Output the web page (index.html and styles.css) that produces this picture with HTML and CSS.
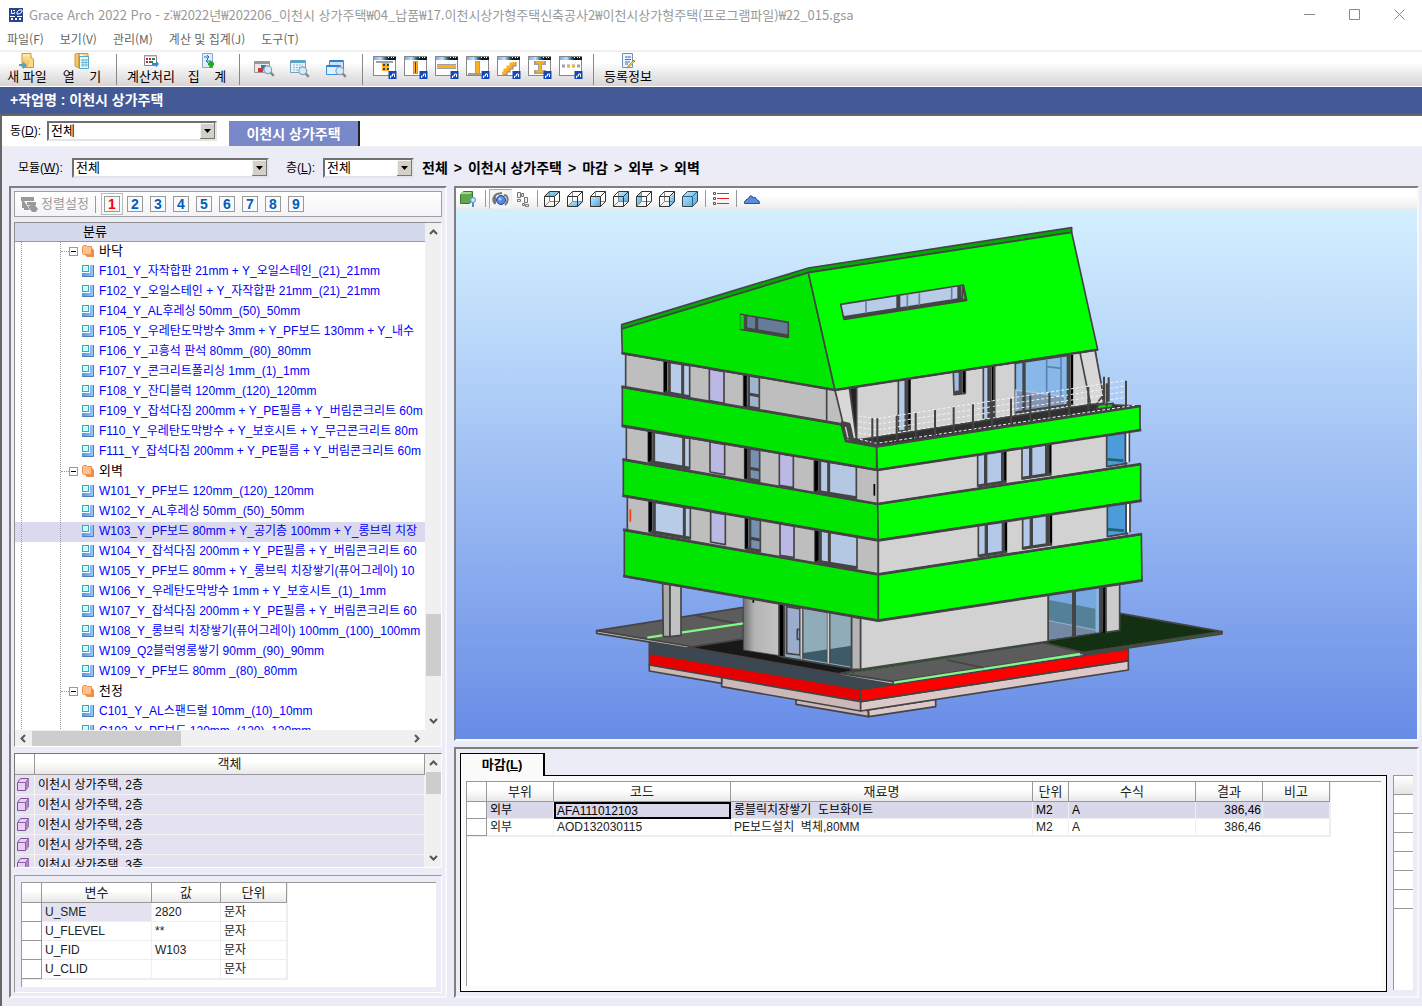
FILE: index.html
```html
<!DOCTYPE html>
<html lang="ko">
<head>
<meta charset="utf-8">
<title>Grace Arch 2022 Pro</title>
<link rel="stylesheet" href="styles.css">
</head>
<body>
<svg class="defs" aria-hidden="true">
  <defs>
    <linearGradient id="blue" x1="0" y1="0" x2="1" y2="1"><stop offset="0" stop-color="#c4e8fb"/><stop offset="1" stop-color="#4ea4dc"/></linearGradient>
    <linearGradient id="part" x1="0" y1="0" x2="1" y2="0"><stop offset="0" stop-color="#5c94dc"/><stop offset="1" stop-color="#9cc8fa"/></linearGradient>
    <linearGradient id="fold" x1="0" y1="0" x2="0" y2="1"><stop offset="0" stop-color="#fff0a8"/><stop offset="1" stop-color="#e4b456"/></linearGradient>
    <linearGradient id="cyl" x1="0" y1="0" x2="1" y2="0"><stop offset="0" stop-color="#6e6e6e"/><stop offset=".3" stop-color="#b4b4b4"/><stop offset="1" stop-color="#c4c4c4"/></linearGradient>
    <linearGradient id="winbar" x1="0" y1="0" x2="1" y2="0"><stop offset="0" stop-color="#7aa8ff"/><stop offset=".3" stop-color="#c8dcf8"/><stop offset=".55" stop-color="#006080"/><stop offset=".7" stop-color="#101828"/></linearGradient>
  </defs>
  <symbol id="i-part" viewBox="0 0 12 12"><path d="M8 0h4v12H0V8h8z" fill="url(#part)"/><path d="M11.500 0v11.500H0" fill="none" stroke="#4a80c8"/><rect x=".5" y=".5" width="6" height="6" fill="#d0fafa" stroke="#38a8b8"/><path d="M7.500 0v7.500H0" fill="none" stroke="#fff"/></symbol>
  <symbol id="i-folder" viewBox="0 0 12 12"><path d="M3 3h7l2 2v7H5l-2-2z" fill="#f08c48"/><path d="M.5 1.500l1-1h3l1 1h4v8h-8l-1-1z" fill="#ffc08c" stroke="#ee9050"/></symbol>
  <symbol id="i-cube" viewBox="0 0 12 13"><path d="M.500 4.500l3-4h8v8l-3 4h-8z" fill="#e8d0f4" stroke="#805098"/><path d="M8.500 4.500l3-4v8l-3 4z" fill="#b088c8"/><path d="M.5 4.500h8v8M8.500 4.500l3-4" fill="none" stroke="#9060a8"/></symbol>
  <symbol id="i-lens" viewBox="0 0 10 10"><path d="M6 6l3 3" stroke="#888" stroke-width="2"/><circle cx="4" cy="4" r="3.200" fill="#d0ecff" stroke="#8aa0b0"/></symbol>
  <symbol id="i-win" viewBox="0 0 24 23"><rect x=".5" y=".5" width="22" height="19" fill="#fff" stroke="#888"/><rect x="1" y="1" width="22" height="3" fill="url(#winbar)"/><path d="M15 1.500h1m2 0h1m1 0h1" stroke="#fff"/></symbol>
  <symbol id="i-badge" viewBox="0 0 8 8"><rect width="8" height="8" fill="#1448b8"/><path d="M2 7V5h2V3h2v3" fill="none" stroke="#fff"/></symbol>
  <symbol id="i-box" viewBox="0 0 16 16"><path d="M5.500.5v10h10M.5 15.500l5-5" fill="none" stroke="#888"/><path d="M.5 5.500h10v10H.5zM.5 5.500l5-5h10l-5 5M10.500 15.500l5-5V.5" fill="none" stroke="#333"/></symbol>
</svg>

<header class="titlebar">
  <svg class="app-icon" width="14" height="14" viewBox="0 0 14 14"><path fill="#24459a" d="M0 0h14v14H0z"/><path d="M2.500 2v3.500h3V4M4 2.500h2M8 4l2-2h3v2l-3 2H8zM1 8.500h5m2 0h5" fill="none" stroke="#fff"/><path d="M2 10h2v2H2zm4 0h2v2H6zm4 0h2v2h-2z" fill="#fff"/></svg>
  <h1>Grace Arch 2022 Pro - z:₩2022년₩202206_이천시 상가주택₩04_납품₩17.이천시상가형주택신축공사2₩이천시상가형주택(프로그램파일)₩22_015.gsa</h1>
  <div class="win-buttons">
    <button aria-label="최소화"><svg width="11" height="11"><path d="M0 5.500h11" stroke="#888"/></svg></button>
    <button aria-label="최대화"><svg width="11" height="11"><path d="M.5.5h10v10H.5z" fill="none" stroke="#888"/></svg></button>
    <button aria-label="닫기"><svg width="11" height="11"><path d="M.5.5l10 10m0-10l-10 10" stroke="#888"/></svg></button>
  </div>
</header>

<nav class="menubar"><a href="#">파일(F)</a><a href="#">보기(V)</a><a href="#">관리(M)</a><a href="#">계산 및 집계(J)</a><a href="#">도구(T)</a></nav>

<div class="toolbar">
  <button class="tool w-s"><svg width="16" height="16"><path d="M3 .5h9v14H3z" fill="url(#fold)" stroke="#c89840"/><path d="M12 4l2.500 2v8.500H8" fill="#f8d880" stroke="#c89840"/><path d="M0 11h4V8.500l4 4-4 3.500v-3H0z" fill="#4aa0d8"/></svg>새 파일</button>
  <button class="tool w-m"><svg width="16" height="16"><path d="M1 1l4-1v15l-4-2z" fill="#f4c868" stroke="#c89840"/><path d="M5 .5h9v4M5 15V.5" fill="#f8d880" stroke="#c89840"/><path d="M5.500 3.500h9v12h-9z" fill="#e8f8fc" stroke="#58a8c8"/><path d="M7 7h7M7 9.500h7M7 12h7M9 6v8m3-8v8" stroke="#68b8d8"/></svg>열&nbsp;&nbsp;&nbsp; 기</button>
  <span class="sep"></span>
  <button class="tool w-l"><svg width="17" height="16"><path d="M1.500 2.500h12v10h-12z" fill="#fff" stroke="#888"/><path d="M1 3h13" stroke="#aab"/><path d="M3 6h2m1 0h2M3 9h2" stroke="#d02040" stroke-width="2"/><path d="M9 6h3M6 9h4" stroke="#308040" stroke-width="2"/><path d="M9 10h4V7.500l3 3.500-3 3.500V12H9z" fill="#3d88d0"/></svg>계산처리</button>
  <button class="tool w-x"><svg width="16" height="16"><path d="M3.500 .5h10v14h-10z" fill="#e0f0fc" stroke="#90a8c0"/><path d="M5 4h5l-2-2m2 2L8 6m4 2H7l2-2M7 8l2 2" stroke="#2868d8" fill="none"/><path d="M9 11h6m-3-3v7" stroke="#18b018" stroke-width="3"/></svg>집&nbsp;&nbsp;&nbsp; 계</button>
  <span class="sep"></span>
  <div class="lens-tools">
    <button aria-label="객체 찾기"><svg width="22" height="20"><path d="M.5 2.500h15v11H.5z" fill="#e8e8e8" stroke="#999"/><path d="M1 4h14" stroke="#999" stroke-width="2"/><path d="M4 9h5v4H4z" fill="#d83030"/><path d="M7 6h5v5H7z" fill="#3878c0"/><use href="#i-lens" x="9" y="6" width="12" height="12"/></svg></button>
    <button aria-label="표 찾기"><svg width="22" height="20"><path d="M.5 1.500h15v12H.5z" fill="#e4f4fc" stroke="#78a0b8"/><path d="M1 3h14" stroke="#48a8d8" stroke-width="2"/><path d="M3 6h10M3 8.500h10M3 11h10" stroke="#90b8d0" stroke-dasharray="2 1"/><use href="#i-lens" x="8" y="7" width="12" height="12"/></svg></button>
    <button aria-label="창 찾기"><svg width="22" height="20"><path d="M3.500 1.500h14v9h-14z" fill="#c8e4fc" stroke="#3c90d8"/><path d="M.5 6.500h14v9H.5z" fill="#e0f0ff" stroke="#3c90d8"/><path d="M1 7h13M4 2h13" stroke="#2c80d0" stroke-width="2"/><use href="#i-lens" x="9" y="7" width="12" height="12"/></svg></button>
  </div>
  <span class="sep"></span>
  <div class="shape-tools">
    <button aria-label="기초"><svg width="24" height="23"><use href="#i-win"/><path d="M3 6h17" stroke="#a0a0a0" stroke-width="2"/><path d="M9 7h7v8H9z" fill="#ffb020"/><path d="M10 9h2m2 0h2m-6 4h2m2 0h2" stroke="#204868" stroke-width="2"/><use href="#i-badge" x="15" y="15" width="9" height="8"/></svg></button>
    <button aria-label="기둥"><svg width="24" height="23"><use href="#i-win"/><path d="M9 5h5v13H9z" fill="#a0a0a0"/><path d="M10 6h3v11h-3z" fill="#ffb020"/><path d="M11.500 6v11" stroke="#204868"/><use href="#i-badge" x="15" y="15" width="9" height="8"/></svg></button>
    <button aria-label="보"><svg width="24" height="23"><use href="#i-win"/><path d="M2 8h19v5H2z" fill="#a0a0a0"/><path d="M2 9h19v3H2z" fill="#ffb020"/><use href="#i-badge" x="15" y="15" width="9" height="8"/></svg></button>
    <button aria-label="벽"><svg width="24" height="23"><use href="#i-win"/><path d="M9 5h5v13H9zM2 17h13v2H2z" fill="#a0a0a0"/><path d="M10 6h3v11h-3z" fill="#ffb020"/><use href="#i-badge" x="15" y="15" width="9" height="8"/></svg></button>
    <button aria-label="계단"><svg width="24" height="23"><use href="#i-win"/><path d="M6 18h3v-3h3v-3h3V9h3V6" fill="none" stroke="#888" stroke-width="3"/><path d="M5 17h3v-3h3v-3h3V8h3V6" fill="none" stroke="#ffb020" stroke-width="3"/><use href="#i-badge" x="15" y="15" width="9" height="8"/></svg></button>
    <button aria-label="철골"><svg width="24" height="23"><use href="#i-win"/><path d="M6 7h12M6 16h12M12 7v10" stroke="#a0a0a0" stroke-width="4"/><path d="M8 6.500h8m-8 9h8m-4-9v8" stroke="#ffb020" stroke-width="2"/><use href="#i-badge" x="15" y="15" width="9" height="8"/></svg></button>
    <button aria-label="점선"><svg width="24" height="23"><use href="#i-win"/><path d="M3 10h18" stroke="#a0a0a0" stroke-width="3" stroke-dasharray="3 2"/><path d="M8 10h9" stroke="#ffb020" stroke-width="2" stroke-dasharray="3 2"/><use href="#i-badge" x="15" y="15" width="9" height="8"/></svg></button>
  </div>
  <span class="sep"></span>
  <button class="tool w-l"><svg width="16" height="16"><path d="M2.500 .5h10v14h-10z" fill="#eaf4ff" stroke="#7890b0"/><path d="M5 4h6M5 6.500h6M5 9h5M5 11h3" stroke="#4070c0"/><path d="M14 7l-6 6-1 2 2-1 6-6z" fill="#f8d040" stroke="#a07820" stroke-width=".6"/><path d="M13 7l2 2" stroke="#e04040"/></svg>등록정보</button>
</div>

<div class="jobbar">+작업명 : 이천시 상가주택</div>

<div class="workspace">
  <div class="tabrow">
    <label for="dong">동(<u>D</u>):</label>
    <select id="dong" class="combo c-dong"><option>전체</option></select>
    <button class="project-tab">이천시 상가주택</button>
  </div>
  <div class="filterrow">
    <label for="module">모듈(<u>W</u>):</label>
    <select id="module" class="combo c-module"><option>전체</option></select>
    <label for="level" class="level-label">층(<u>L</u>):</label>
    <select id="level" class="combo c-level"><option>전체</option></select>
    <strong class="crumbs"><span>전체</span><span>&gt;</span><span>이천시 상가주택</span><span>&gt;</span><span>마감</span><span>&gt;</span><span>외부</span><span>&gt;</span><span>외벽</span></strong>
  </div>

  <div class="columns">
    <aside class="side sunken">
      <div class="sortbar">
        <button class="sortbtn" disabled><svg width="17" height="16"><path d="M0 1h13v4H0zM3 5v9h6" fill="#999"/><path d="M6 6h9v3H6zM7 10l6-2 4 5-2 3h-4z" fill="#999"/><path d="M2 5v6h4" fill="none" stroke="#999" stroke-width="2"/></svg>정렬설정</button>
        <span class="minisep"></span>
        <div class="levels"><button class="on">1</button><button>2</button><button>3</button><button>4</button><button>5</button><button>6</button><button>7</button><button>8</button><button>9</button></div>
      </div>

      <section class="tree">
        <div class="tree-pane">
          <h2>분류</h2>
          <ul>
            <li class="group"><i class="toggle"></i><svg><use href="#i-folder"/></svg>바닥</li>
            <li><svg><use href="#i-part"/></svg>F101_Y_자작합판 21mm + Y_오일스테인_(21)_21mm</li>
            <li><svg><use href="#i-part"/></svg>F102_Y_오일스테인 + Y_자작합판 21mm_(21)_21mm</li>
            <li><svg><use href="#i-part"/></svg>F104_Y_AL후레싱 50mm_(50)_50mm</li>
            <li><svg><use href="#i-part"/></svg>F105_Y_우레탄도막방수 3mm + Y_PF보드 130mm + Y_내수</li>
            <li><svg><use href="#i-part"/></svg>F106_Y_고흥석 판석 80mm_(80)_80mm</li>
            <li><svg><use href="#i-part"/></svg>F107_Y_콘크리트폴리싱 1mm_(1)_1mm</li>
            <li><svg><use href="#i-part"/></svg>F108_Y_잔디블럭 120mm_(120)_120mm</li>
            <li><svg><use href="#i-part"/></svg>F109_Y_잡석다짐 200mm + Y_PE필름 + Y_버림콘크리트 60m</li>
            <li><svg><use href="#i-part"/></svg>F110_Y_우레탄도막방수 + Y_보호시트 + Y_무근콘크리트 80m</li>
            <li><svg><use href="#i-part"/></svg>F111_Y_잡석다짐 200mm + Y_PE필름 + Y_버림콘크리트 60m</li>
            <li class="group"><i class="toggle"></i><svg><use href="#i-folder"/></svg>외벽</li>
            <li><svg><use href="#i-part"/></svg>W101_Y_PF보드 120mm_(120)_120mm</li>
            <li><svg><use href="#i-part"/></svg>W102_Y_AL후레싱 50mm_(50)_50mm</li>
            <li class="selected"><svg><use href="#i-part"/></svg>W103_Y_PF보드 80mm + Y_공기층 100mm + Y_롱브릭 치장</li>
            <li><svg><use href="#i-part"/></svg>W104_Y_잡석다짐 200mm + Y_PE필름 + Y_버림콘크리트 60</li>
            <li><svg><use href="#i-part"/></svg>W105_Y_PF보드 80mm + Y_롱브릭 치장쌓기(퓨어그레이) 10</li>
            <li><svg><use href="#i-part"/></svg>W106_Y_우레탄도막방수 1mm + Y_보호시트_(1)_1mm</li>
            <li><svg><use href="#i-part"/></svg>W107_Y_잡석다짐 200mm + Y_PE필름 + Y_버림콘크리트 60</li>
            <li><svg><use href="#i-part"/></svg>W108_Y_롱브릭 치장쌓기(퓨어그레이) 100mm_(100)_100mm</li>
            <li><svg><use href="#i-part"/></svg>W109_Q2블럭영롱쌓기 90mm_(90)_90mm</li>
            <li><svg><use href="#i-part"/></svg>W109_Y_PF보드 80mm _(80)_80mm</li>
            <li class="group"><i class="toggle"></i><svg><use href="#i-folder"/></svg>천정</li>
            <li><svg><use href="#i-part"/></svg>C101_Y_AL스팬드럴 10mm_(10)_10mm</li>
            <li><svg><use href="#i-part"/></svg>C102_Y_PF보드 120mm_(120)_120mm</li>
          </ul>
        </div>
        <div class="vscroll tree-v"><svg width="9" height="6"><path d="M1 5l3.500-3.500L8 5"/></svg><span></span><svg width="9" height="6"><path d="M1 1l3.500 3.500L8 1"/></svg></div>
        <div class="hscroll"><svg width="6" height="9"><path d="M5 1L1.500 4.500 5 8"/></svg><span></span><svg width="6" height="9"><path d="M1 1l3.500 3.500L1 8"/></svg></div>
      </section>

      <section class="objects">
        <div class="objects-pane">
        <table>
          <colgroup><col class="o-icon"><col></colgroup>
          <thead><tr><th></th><th>객체</th></tr></thead>
          <tbody>
            <tr><td><svg><use href="#i-cube"/></svg></td><td>이천시 상가주택, 2층</td></tr>
            <tr><td><svg><use href="#i-cube"/></svg></td><td>이천시 상가주택, 2층</td></tr>
            <tr><td><svg><use href="#i-cube"/></svg></td><td>이천시 상가주택, 2층</td></tr>
            <tr><td><svg><use href="#i-cube"/></svg></td><td>이천시 상가주택, 2층</td></tr>
            <tr><td><svg><use href="#i-cube"/></svg></td><td>이천시 상가주택, 3층</td></tr>
          </tbody>
        </table>
        </div>
        <div class="vscroll obj-v"><svg width="9" height="6"><path d="M1 5l3.500-3.500L8 5"/></svg><span></span><svg width="9" height="6"><path d="M1 1l3.500 3.500L8 1"/></svg></div>
      </section>

      <section class="vars">
        <div class="vars-pane">
          <table class="grid">
            <colgroup><col class="v0"><col class="v1"><col class="v2"><col class="v3"></colgroup>
            <thead><tr><th></th><th>변수</th><th>값</th><th>단위</th></tr></thead>
            <tbody>
              <tr><th></th><td class="picked">U_SME</td><td>2820</td><td>문자</td></tr>
              <tr><th></th><td>U_FLEVEL</td><td>**</td><td>문자</td></tr>
              <tr><th></th><td>U_FID</td><td>W103</td><td>문자</td></tr>
              <tr><th></th><td>U_CLID</td><td></td><td>문자</td></tr>
            </tbody>
          </table>
        </div>
      </section>
    </aside>

    <main class="content">
      <section class="viewer sunken">
        <div class="viewbar">
          <button aria-label="모델 표시"><svg width="18" height="16"><path d="M.5 3.500l3-3h9v9l-3 3h-9z" fill="#60a850" stroke="#387830"/><path d="M1 1h11L10 3H1z" fill="#a0d890"/><circle cx="13" cy="9" r="2.500" fill="#c8e8ff" stroke="#4890c8"/><path d="M13 12v4" stroke="#4890c8" stroke-width="2"/></svg></button>
          <span class="minisep"></span>
          <button class="pressed" aria-label="회전"><svg width="17" height="16"><path d="M3 13C0 9 1 5 5 3l5-1M3 5v8M14 4c3 4 2 7-1 10M12 4l3 1" fill="none" stroke="#777" stroke-width="2"/><circle cx="9" cy="9" r="4.500" fill="#5888e4" stroke="#204898"/><circle cx="8" cy="8" r="1.500" fill="#b8d0fc"/></svg></button>
          <button aria-label="보행"><svg width="14" height="16"><path d="M1.500 1.500h3v5h-3zM1.500 8.500h3v2h-3zM5.500 2.500h2v3h-2zM8.500 6.500h3v5h-3zM9.500 13.500h3v2h-3zM6.500 12.500h2v2h-2z" fill="#eee" stroke="#777"/></svg></button>
          <span class="minisep"></span>
          <div class="cubes">
            <button aria-label="위"><svg width="16" height="16"><path d="M0 5l5-5h11l-5 5z" fill="url(#blue)"/><use href="#i-box"/></svg></button>
            <button aria-label="아래"><svg width="16" height="16"><path d="M0 16l5-5h11l-5 5z" fill="url(#blue)"/><use href="#i-box"/></svg></button>
            <button aria-label="앞"><svg width="16" height="16"><use href="#i-box"/><path d="M1 6h9v9H1z" fill="url(#blue)"/></svg></button>
            <button aria-label="뒤"><svg width="16" height="16"><path d="M5 1h11v10H5z" fill="url(#blue)"/><use href="#i-box"/></svg></button>
            <button aria-label="왼쪽"><svg width="16" height="16"><path d="M0 6l5-5v10l-5 5z" fill="url(#blue)"/><use href="#i-box"/></svg></button>
            <button aria-label="오른쪽"><svg width="16" height="16"><path d="M11 6l5-5v10l-5 5z" fill="url(#blue)"/><use href="#i-box"/></svg></button>
            <button aria-label="입체"><svg width="16" height="16"><path d="M.5 5.500l5-5h10v10l-5 5H.5z" fill="url(#blue)" stroke="#345"/><path d="M.5 5.500h10v10m0-10l5-5" fill="none" stroke="#268"/></svg></button>
          </div>
          <span class="minisep"></span>
          <button aria-label="목록"><svg width="16" height="14"><path d="M4 1.500h12M4 6.500h12M4 11.500h12" stroke="#f02020"/><path d="M.5.5h2v2h-2zm0 5h2v2h-2zm0 5h2v2h-2z" fill="#fff" stroke="#555"/></svg></button>
          <span class="minisep"></span>
          <button aria-label="지형"><svg width="16" height="10"><path d="M.5 9.500V7.500L3 5h1l2-3h2l1 2 2-1 2 3 2 1 .500 2.500z" fill="#5c8cdc" stroke="#2c50a0"/></svg></button>
        </div>
        <svg class="model" viewBox="-402 -3 2883 1590" role="img" aria-label="건물 모델">
          <g stroke="#444" stroke-width="5" stroke-linejoin="round">
            <!-- foundation -->
            <g fill="#ccb8b8"><path d="M618 1468L835 1502V1520L618 1483z"/><path d="M395 1400L812 1472V1503L395 1430z"/><path d="M178 1363L395 1400V1420L178 1383z"/></g>
            <g fill="#dcc8c8"><path d="M835 1500L1037 1468V1490L837 1520z"/><path d="M812 1475L1615 1352V1380L812 1503z"/></g>
            <path d="M178 1296L812 1402V1440L178 1330z" fill="#3c4754"/>
            <path d="M178 1330L812 1438V1475L178 1365z" fill="#e60000"/>
            <path d="M812 1438L1615 1317V1352L812 1475z" fill="#f00"/>
            <path d="M812 1400L905 1415V1424L812 1438z" fill="#3c4754"/>
            <!-- ground slabs -->
            <path d="M20 1262L460 1192V1290L295 1312L20 1268z" fill="#5c5c5c"/>
            <path d="M20 1262V1270L295 1315V1308z" fill="#bbb"/>
            <path d="M320 1217L440 1240" fill="none"/>
            <path d="M172 1283L460 1240" stroke="#84f884" stroke-width="7"/>
            <path d="M295 1312L460 1287L815 1375L750 1392z" fill="#181818"/>
            <path d="M1355 1298L1590 1210L1896 1265L1480 1328z" fill="#133013"/>
            <path d="M1480 1328L1896 1265V1272L1480 1334z" fill="#287028"/>
            <path d="M750 1390L1360 1298L1480 1328L905 1415z" fill="#5c5c5c"/>
            <path d="M750 1390V1396L902 1422H910V1415z" fill="#bbb"/>
            <path d="M912 1418L1470 1332" stroke="#84f884" stroke-width="7"/>
            <path d="M1070 1350L1180 1373" fill="none"/>
            <path d="M785 1387L1355 1299" stroke="#265c26" stroke-dasharray="10 7" fill="none"/>
            <!-- ground storey -->
            <path d="M218 1120L240 1123V1280H220z" fill="#aaa"/><path d="M240 1123L273 1128V1276L240 1280z" fill="#c2c2c2"/>
            <path d="M460 1160L570 1178V1337L460 1320z" fill="url(#cyl)" stroke-width="2"/>
            <path d="M567 1180L583 1183V1342L567 1338z" fill="#000"/>
            <path d="M583 1183L785 1217V1376L583 1342z" fill="#8facb8"/>
            <path d="M590 1190L630 1197V1335L590 1330z" fill="#9caccc"/>
            <path d="M622 1258h8v30h-8z" fill="none"/>
            <path d="M635 1330L785 1307V1370L635 1345z" fill="#3c5a68" stroke="none"/>
            <path d="M635 1195V1348M716 1207V1360" stroke="#444" stroke-width="11"/><path d="M634 1195V1348M715 1207V1360" stroke="#ccc"/>
            <path d="M785 1220L812 1225V1378H785z" fill="#b4b4b4"/>
            <path d="M812 1222L1375 1155V1294L812 1378z" fill="#d2d2d2"/>
            <path d="M1375 1152L1530 1130V1267L1375 1292z" fill="#78a8e0"/><path d="M1377 1170L1516 1196V1258L1377 1232z" fill="#548098" stroke="none"/><path d="M1377 1232L1516 1258V1268L1377 1288z" fill="#7488a4" stroke="none"/><path d="M1377 1232L1516 1260" stroke="#a8c4dc" stroke-width="2"/><path d="M1522 1132V1268" stroke="#90b4dc" stroke-width="7"/>
            <path d="M1452 1140V1280M1535 1130V1265" stroke-width="12"/><path d="M1543 1128V1268" stroke="#000" stroke-width="7"/>
            <path d="M1548 1128L1589 1122V1261L1548 1267z" fill="#ccc"/>
            <!-- storey 2 -->
            <path d="M112 860L865 990V1095L112 963z" fill="#bebebe"/><path d="M865 990L1610 872V978L865 1093z" fill="#d2d2d2"/>
            <!-- storey 3 -->
            <path d="M109 648L863 778V884L109 752z" fill="#bebebe"/><path d="M863 780L1607 662V768L863 882z" fill="#d2d2d2"/>
            <g id="storey">
              <path d="M175 664L299 685V776L175 755z" fill="#b8cce8"/><path d="M180 664V755" stroke="#000" stroke-width="11"/><path d="M191 666V758M281 681V770" stroke-width="9"/><path d="M180 755L299 775" stroke-width="10"/>
              <path d="M360 696L404 703V794L360 786z" fill="#bcb8e4"/>
              <path d="M464 714L509 721V815L464 806z" fill="#7890b0"/><path d="M468 714V806" stroke="#000" stroke-width="9"/><path d="M478 716V808" stroke-width="8"/><path d="M480 775L509 780M470 806L509 813" stroke-width="9"/>
              <path d="M568 731L610 738V833L568 826z" fill="#bcb8e4"/>
              <path d="M673 750L799 770V865L673 844z" fill="#b4c8e4"/><path d="M679 750V844" stroke="#000" stroke-width="11"/><path d="M689 752V846M716 757V850" stroke-width="9"/><path d="M680 844L799 864" stroke-width="10"/>
              <path d="M1163 735L1245 722V815L1163 828z" fill="#b4c8e8"/><path d="M1187 730V824M1238 724V816" stroke-width="10"/><path d="M1246 722V818" stroke="#000" stroke-width="7"/><path d="M1163 828L1248 815" stroke-width="9"/>
              <path d="M1296 715L1375 703V793L1296 807z" fill="#b4c8e8"/><path d="M1322 710V803M1370 703V795" stroke-width="10"/><path d="M1381 702V796" stroke="#000" stroke-width="7"/><path d="M1296 805L1383 792" stroke-width="9"/>
              <path d="M1550 676L1610 667V760L1550 770z" fill="#4c9cdc"/><path d="M1552 748L1600 752" stroke="#246070" stroke-width="8"/><path d="M1606 667V760M1618 665V757" stroke-width="5"/><path d="M1612 666V757" stroke="#fff" stroke-width="6"/>
            </g>
            <use href="#storey" x="2" y="210"/>
            <!-- storey 4 -->
            <path d="M107 432L735 540L765 650L107 535z" fill="#bebebe"/>
            <path d="M222 455L299 467V560L222 547z" fill="#b8cce8"/><path d="M227 455V547" stroke="#000" stroke-width="10"/><path d="M238 457V550M278 464V555" stroke-width="9"/><path d="M225 547L299 560" stroke-width="9"/>
            <path d="M358 477L402 485V580L358 572z" fill="#bcb8e4"/>
            <path d="M461 495L508 503V598L461 590z" fill="#a0b4cc"/><path d="M466 495V592" stroke="#000" stroke-width="9"/><path d="M476 497V592" stroke-width="8"/><path d="M480 553L508 558M470 590L508 597" stroke-width="9"/>
            <path d="M710 536V632"/>
            <path d="M735 540L1515 420L1540 580L800 695z" fill="#d2d2d2"/>
            <path d="M780 534L800 532V690L790 640z" fill="#222"/>
            <path d="M925 512L960 507V660L925 664z" fill="#b4c8e8"/><path d="M950 508V660" stroke-width="13"/><path d="M958 508V650" stroke="#000" stroke-width="6"/>
            <path d="M1090 487L1126 482V550L1092 554z" fill="#a4bce0"/><path d="M1112 484V546L1092 550" stroke-width="12" fill="none"/><path d="M1122 482V548" stroke="#000" stroke-width="7"/>
            <path d="M1180 472L1214 467V625L1180 630z" fill="#b4c8e8"/><path d="M1198 470V625" stroke-width="12"/><path d="M1208 468V625" stroke="#000" stroke-width="6"/>
            <path d="M1276 460L1435 436V590L1276 612z" fill="#88b8e8"/><path d="M1278 540L1425 560V592L1278 610z" fill="#8494b4" stroke="#a8c4ec"/><path d="M1370 445V545M1370 470L1415 475M1413 440V560" stroke="#5c80b0"/><path d="M1302 458V608" stroke-width="10"/><path d="M1436 435V592" stroke-width="12"/><path d="M1446 435V590" stroke="#000" stroke-width="7"/><path d="M1276 608L1450 583" stroke-width="8"/>
            <path d="M1470 428L1515 420L1540 555L1505 600z" fill="#d8d8d8"/>
            <path d="M735 540L778 534L800 692L770 685z" fill="#d8d8d8"/>
            <!-- finish bands -->
            <path d="M97 532L755 643L768 693L860 709V780L97 649z" fill="#00e600"/>
            <path d="M800 690L1510 582L1650 588L860 709z" fill="#303030"/>
            <path d="M1525 585L1570 580L1565 592L1520 597z" fill="#00e600"/>
            <path d="M860 709L1650 588V660L862 780z" fill="#0f0"/>
            <path d="M100 750L863 882L865 991L100 857z" fill="#00e600"/><path d="M863 882L1652 763V872L865 991z" fill="#0f0"/>
            <path d="M103 961L865 1093V1232L103 1099z" fill="#00e600"/><path d="M865 1093L1654 973L1656 1112L865 1232z" fill="#0f0"/>
            <g fill="none" stroke-width="8"><path d="M94 530L755 643L768 693L860 709L1652 588"/><path d="M95 647L862 780L1654 660"/><path d="M97 748L863 882L1653 762"/><path d="M97 857L865 991L1655 872"/><path d="M99 959L865 1093L1656 972"/><path d="M99 1098L865 1232L1658 1111"/></g>
            <path d="M752 640L775 645L785 690L860 704" fill="none" stroke-width="15"/>
            <!-- roof -->
            <path d="M95 344L655 174L1445 53V67L655 188L95 357z" fill="#00ac00"/>
            <path d="M95 357L655 188L735 540L97 430z" fill="#00e600"/><path d="M655 188L1445 67L1523 419L735 540z" fill="#0f0"/>
            <path d="M94 429L735 540L1524 419" fill="none" stroke-width="7"/>
            <path d="M452 313L595 337V382L452 358z" fill="#647c98"/><path d="M455 315V357" stroke="#0d0" stroke-width="8"/><path d="M467 317V356L595 378M500 323V360" fill="none" stroke-width="9"/>
            <path d="M752 283L1120 225L1130 271L762 328z" fill="#b8cce8"/><path d="M762 323L1124 267" stroke-width="10"/><path d="M925 258V300M1108 228V268" stroke-width="12"/><path d="M828 272V310M952 255V292M988 250V286M1085 234V270" stroke="#6880a0"/><path d="M1118 230L1128 269L1116 268z" fill="#0d0"/>
            <!-- railing -->
            <g stroke="#f4f4f4" stroke-width="3" stroke-dasharray="9 6" fill="none"><path d="M805 618L860 626L1550 520L1605 512"/><path d="M805 635L860 643L1550 537L1605 528"/><path d="M805 652L860 660L1550 554L1605 545"/><path d="M805 669L860 677L1550 571L1605 562"/><path d="M810 688L860 700L1640 585"/></g>
            <path d="M847 625V700M862 625V702M920 617V693M977 609V684M1035 600V675M1091 592V667M1149 583V658M1206 575V650M1263 566V641M1321 557V632M1378 548V623M1437 540V615M1495 531V600M1550 520V590M1542 500V580M1556 502V575M1608 512V585" stroke-width="6"/>
            <path d="M853 822V857" stroke="#000"/><path d="M121 898V935" stroke="#f04010"/><path d="M490 1170V1178" stroke="#000"/>
          </g>
        </svg>
      </section>

      <section class="detail sunken">
        <div class="detail-main">
          <button class="detail-tab">마감(<u>L</u>)</button>
          <div class="detail-body">
            <div class="detail-pane">
              <table class="grid finish">
                <colgroup><col class="f0"><col class="f1"><col class="f2"><col class="f3"><col class="f4"><col class="f5"><col class="f6"><col class="f7"></colgroup>
                <thead><tr><th></th><th>부위</th><th>코드</th><th>재료명</th><th>단위</th><th>수식</th><th>결과</th><th>비고</th></tr></thead>
                <tbody>
                  <tr class="selected"><th></th><td>외부</td><td class="focus">AFA111012103</td><td>롱블릭치장쌓기&nbsp; 도브화이트</td><td>M2</td><td>A</td><td class="num">386,46</td><td></td></tr>
                  <tr><th></th><td>외부</td><td>AOD132030115</td><td>PE보드설치&nbsp; 벽체,80MM</td><td>M2</td><td>A</td><td class="num">386,46</td><td></td></tr>
                </tbody>
              </table>
            </div>
          </div>
        </div>
        <div class="strip"><i class="cap"></i><i></i><i></i><i></i><i></i><i></i><i></i></div>
      </section>
    </main>
  </div>
</div>
</body>
</html>
```
FILE: styles.css
```css
* { box-sizing: border-box; }

body {
  margin: 0;
  height: 100vh;
  min-height: 700px;
  display: flex;
  flex-direction: column;
  overflow: hidden;
  background: #fff;
  color: #000;
  font: 12px/16px "Liberation Sans", "Noto Sans CJK KR", sans-serif;
}

button, select { font: inherit; color: inherit; }
button { border: 0; padding: 0; background: none; }
svg { display: block; flex: none; }
h1, h2, ul { margin: 0; padding: 0; }
table { border-collapse: separate; border-spacing: 0; table-layout: fixed; }
.defs { position: absolute; width: 0; height: 0; }

/* Window frame */
.titlebar { flex: none; height: 29px; display: flex; align-items: center; padding-left: 9px; }
.titlebar h1 {
  flex: 1;
  margin-left: 6px;
  color: #999;
  font: 13px/16px "Noto Sans CJK KR", sans-serif;
  white-space: nowrap;
}
.win-buttons { display: flex; }
.win-buttons button { width: 45px; display: grid; place-items: center; }
.win-buttons svg { fill: none; }
.menubar { flex: none; height: 21px; display: flex; align-items: center; gap: 16px; padding: 0 0 2px 7px; }
.menubar a { color: #666; text-decoration: none; font-family: "Noto Sans CJK KR", sans-serif; }

/* Main toolbar */
.toolbar {
  flex: none;
  height: 36px;
  display: flex;
  align-items: center;
  padding-left: 4px;
  border-top: 2px solid #f0f0f0;
  background: linear-gradient(#fff 30%, #d6d4d6);
}
.tool { display: flex; flex-direction: column; align-items: center; font-size: 13px; line-height: 16px; white-space: nowrap; }
.w-s { width: 46px; }
.w-m { width: 64px; }
.w-l { width: 64px; }
.w-x { width: 54px; padding-right: 6px; }
.sep { width: 1px; height: 31px; margin: 0 2px; background: #888; }
.lens-tools { display: flex; gap: 14px; padding: 0 12px; }
.shape-tools { display: flex; gap: 7px; padding: 0 8px 3px; }

.jobbar {
  flex: none;
  height: 28px;
  border-top: 1px solid #fff;
  padding-left: 10px;
  background: #445a96;
  color: #fff;
  font-size: 14px;
  font-weight: bold;
  line-height: 27px;
}

/* Workspace */
.workspace {
  flex: 1;
  min-height: 0;
  display: flex;
  flex-direction: column;
  margin-bottom: 2px;
  padding-bottom: 8px;
  border: 2px solid #666;
  border-width: 2px 0 0 2px;
  background: #ececf6;
}
.tabrow { flex: none; height: 31px; display: flex; align-items: center; padding-left: 8px; background: #fff; border-bottom: 1px solid #eee; }
.tabrow label { width: 37px; }
.project-tab {
  align-self: flex-end;
  width: 131px;
  height: 25px;
  margin-left: 12px;
  border-right: 2px solid #222;
  background: #7888c8;
  color: #fff;
  font-size: 14px;
  font-weight: bold;
}
.filterrow { flex: none; height: 39px; display: flex; align-items: center; padding: 2px 0 0 16px; }
.filterrow label { width: 54px; white-space: nowrap; }
.filterrow .level-label { width: 37px; margin-left: 17px; }
.crumbs { display: flex; gap: 6px; margin-left: 8px; font-size: 14px; white-space: nowrap; }
.combo {
  appearance: none;
  height: 20px;
  padding: 0 18px 0 2px;
  border: 2px solid;
  border-color: #707070 #e4e4e4 #e4e4e4 #707070;
  border-radius: 0;
  background: #fff url("data:image/svg+xml,%3Csvg xmlns='http://www.w3.org/2000/svg' width='15' height='16'%3E%3Cpath d='M0 0h15v16H0z' fill='%23777'/%3E%3Cpath d='M0 0h14v15H0z' fill='%23f4f4f4'/%3E%3Cpath d='M1 1h13v14H1z' fill='%23d4d0c8'/%3E%3Cpath d='M4 6h7l-3.500 4z'/%3E%3C/svg%3E") right center no-repeat;
  font-size: 13px;
  line-height: 16px;
}
.c-dong { width: 170px; }
.c-module { width: 197px; }
.c-level { width: 91px; }

.columns { flex: 1; min-height: 0; display: flex; gap: 7px; padding: 0 3px 0 7px; }
.sunken { border: 2px solid; border-color: #808080 #f8f8fc #f8f8fc #808080; }

/* Left side */
.side { flex: none; width: 438px; display: flex; flex-direction: column; padding: 3px; }
.sortbar {
  flex: none;
  height: 26px;
  display: flex;
  align-items: center;
  padding-left: 6px;
  border: 1px solid #a0a0a0;
  background: linear-gradient(#fff, #f4f4f8);
}
.sortbtn { display: flex; align-items: center; gap: 3px; color: #999; font-size: 13px; }
.minisep { width: 1px; height: 17px; background: #999; }
.sortbar .minisep { margin: 0 8px 0 6px; }
.levels { display: flex; gap: 7px; }
.levels button { width: 16px; height: 16px; border: 1px solid #999; background: #fafafc; color: #0060b8; font-size: 14px; font-weight: bold; line-height: 14px; }
.levels .on { color: #f00; outline: 1px solid #bbb; outline-offset: 2px; }

.tree {
  flex: 1;
  min-height: 0;
  margin-top: 5px;
  display: grid;
  grid-template: minmax(0, 1fr) 16px / minmax(0, 1fr) 16px;
  border: 1px solid #909090;
  border-right-color: #fff;
  border-bottom-color: #fff;
  background: #f0f0f0;
}
.tree-pane { overflow: hidden; background: #fff; }
.tree h2 { height: 19px; padding-left: 68px; border-bottom: 1px solid #999; background: #d4daec; font-size: 13px; font-weight: normal; line-height: 18px; }
.tree ul {
  list-style: none;
  background: repeating-linear-gradient(#999 0 1px, transparent 1px 2px) 6px 0 / 1px 100% no-repeat,
    repeating-linear-gradient(#999 0 1px, transparent 1px 2px) 45px 0 / 1px 100% no-repeat;
}
.tree li { height: 20px; display: flex; align-items: center; gap: 5px; padding: 0 0 2px 67px; color: #00f; white-space: nowrap; }
.tree li svg { width: 12px; height: 12px; }
.tree .group { padding-left: 46px; color: #000; font-size: 13px; }
.tree .group::before { content: ""; width: 8px; margin-right: -5px; border-top: 1px dotted #999; }
.tree .selected { background: rgba(150, 145, 205, .35); }
.toggle { width: 9px; height: 9px; margin-right: -1px; border: 1px solid #999; background: linear-gradient(#000, #000) center / 5px 1px no-repeat #fff; }

.vscroll, .hscroll { display: flex; align-items: center; background: #f0f0f0; }
.vscroll { flex-direction: column; padding: 6px 0; }
.vscroll svg, .hscroll svg { fill: none; stroke: #555; stroke-width: 2; }
.vscroll span { width: 15px; background: #cdcdcd; }
.vscroll svg:last-child { margin-top: auto; }
.tree-v span { height: 62px; margin-top: 379px; }
.hscroll { padding: 0 5px; }
.hscroll span { width: 149px; height: 15px; margin-left: 6px; background: #cdcdcd; }
.hscroll svg:last-child { margin-left: auto; }

.objects { flex: none; height: 115px; margin-top: 6px; display: grid; grid-template: minmax(0, 1fr) / minmax(0, 1fr) 16px; border: 1px solid #777; border-right-color: #fff; border-bottom-color: #fff; background: #f0f0f0; }
.objects-pane { overflow: hidden; }
.obj-v span { height: 22px; margin-top: 6px; }
.objects table { width: 100%; }
.o-icon { width: 20px; }
th { height: 20px; padding: 0; border: solid #999; border-width: 0 1px 1px 0; background: linear-gradient(#fff 40%, #e8e8e8); font-weight: normal; font-size: 13px; line-height: 18px; color: #222; }
.objects th { height: 21px; }
.objects td { height: 20px; padding: 0 3px; border-bottom: 1px solid #f4f4f4; border-right: 1px solid #f4f4f4; background: #e4e2f0; }
.objects td:first-child { padding: 0 2px; }
.objects td svg { width: 12px; height: 13px; }

.vars { flex: none; height: 118px; margin-top: 7px; padding: 6px 5px 5px 6px; border: 1px solid #999; border-right-color: #fff; border-bottom-color: #fff; }
.vars-pane, .detail-pane { height: 100%; overflow: hidden; border: solid #999; border-width: 1px 0 0 1px; background: #fff; }
.grid { border-right: 1px solid #eee; border-bottom: 1px solid #eee; }
.grid td { height: 19px; padding: 0 3px; border: solid #eee; border-width: 0 1px 1px 0; color: #222; line-height: 16px; white-space: nowrap; }
.grid tbody th { height: 19px; background: #fff; }
.grid td.picked { background: #e4e2f0; }
.v0 { width: 20px; } .v1 { width: 110px; } .v2 { width: 69px; } .v3 { width: 66px; }

/* Right side */
.content { flex: 1; min-width: 0; display: flex; flex-direction: column; gap: 6px; }
.viewer { flex: 1; min-height: 0; display: flex; flex-direction: column; }
.viewbar { flex: none; height: 21px; display: flex; align-items: center; padding-left: 4px; background: linear-gradient(#fff 40%, #ececec); }
.viewbar .minisep { margin: 0 7px; }
.viewbar .pressed { height: 20px; padding: 1px 2px; margin: 0 4px 0 -4px; border: 1px solid; border-color: #aaa #eee #eee #aaa; background: #f4f4f8; }
.cubes { display: flex; gap: 7px; margin-left: -1px; }
.model { flex: 1; width: 100%; min-height: 0; background: linear-gradient(#d4f0ff, #a0c0f4 48%, #688ce6); }

.detail { flex: none; height: 251px; display: flex; gap: 6px; padding: 4px 4px 4px 4px; }
.detail-main { flex: 1; min-width: 0; display: flex; flex-direction: column; }
.detail-tab {
  position: relative;
  width: 85px;
  height: 23px;
  margin-bottom: -1px;
  border: 1px solid #000;
  border-bottom: 0;
  border-right-width: 2px;
  background: #fafafa;
  font-size: 13px;
  font-weight: bold;
}
.detail-body { flex: 1; min-height: 0; padding: 5px; border: 1px solid #000; background: #fafafa; }
.finish td { height: 17px; padding: 0 3px; line-height: 14px; }
.finish tbody th { height: 17px; }
.finish .selected td { background: #d9d7ea; color: #000; }
.finish .selected .focus { padding: 0 1px; border: 2px solid #000; line-height: 12px; }
.finish .num { padding: 0 1px; text-align: right; }
.f0 { width: 20px; } .f1 { width: 67px; } .f2 { width: 177px; } .f3 { width: 302px; } .f4 { width: 36px; } .f5 { width: 127px; } .f6 { width: 67px; } .f7 { width: 67px; }
.strip { width: 20px; margin: 22px 0 2px; border: solid #999; border-width: 1px 0 0 1px; background: #fff; }
.strip i { display: block; height: 19px; border-bottom: 1px solid #999; }
.strip .cap { background: linear-gradient(#fff, #e4e4e4); }
```
